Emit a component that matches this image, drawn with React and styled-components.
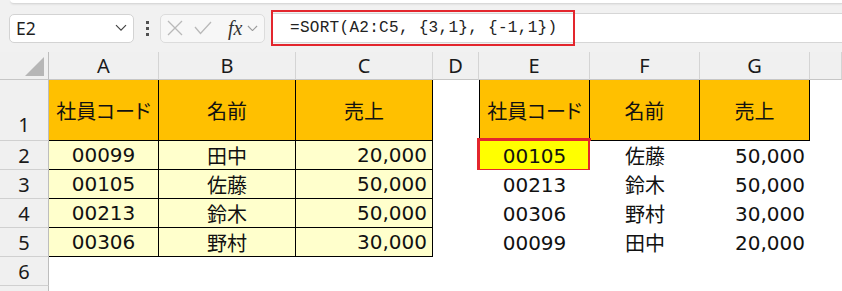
import styled, { createGlobalStyle } from "styled-components";

const GlobalStyle = createGlobalStyle`
  html, body {
    margin: 0;
    padding: 0;
    background: #f1f1f1;
    overflow: hidden;
  }
  body {
    font-family: "Noto Sans", "Noto Sans CJK JP", sans-serif;
  }
`;

const Page = styled.div`
  width: 842px;
  height: 291px;
  background: #f1f1f1;
  overflow: hidden;
`;

const TopStrip = styled.div`
  height: 3px;
  margin-left: 10px;
  background: #ffffff;
  border-bottom: 1px solid #d9d9d9;
  border-bottom-left-radius: 6px;
  box-shadow: 0 1px 2px rgba(0, 0, 0, 0.06);
`;

const FormulaBar = styled.div`
  display: flex;
  align-items: center;
  height: 48px;
  padding-left: 9px;
`;

const NameBox = styled.div`
  box-sizing: border-box;
  display: flex;
  align-items: center;
  justify-content: space-between;
  width: 125px;
  height: 29px;
  padding: 0 6px 0 6px;
  background: #ffffff;
  border: 1px solid #d3d3d3;
  border-radius: 5px;
  font-size: 17.5px;
  color: #1f1f1f;
`;

const Dots = styled.div`
  display: flex;
  flex-direction: column;
  gap: 3px;
  margin: 0 11px 0 12px;

  span {
    width: 3px;
    height: 3px;
    background: #505050;
  }
`;

const FxGroup = styled.div`
  box-sizing: border-box;
  display: flex;
  align-items: center;
  width: 105px;
  height: 29px;
  padding-left: 6px;
  gap: 11px;
  background: #f7f7f7;
  border: 1px solid #dcdcdc;
  border-radius: 5px;
`;

const Fx = styled.span`
  font-family: "Liberation Serif", serif;
  font-style: italic;
  font-size: 20px;
  color: #333333;
  margin-left: 5px;
  margin-right: -6px;
`;

const FormulaInput = styled.div`
  position: relative;
  flex: 1;
  box-sizing: border-box;
  display: flex;
  align-items: center;
  height: 30px;
  margin-left: 6px;
  padding-left: 19px;
  background: #ffffff;
  border-top: 1px solid #d6d6d6;
  border-bottom: 1px solid #d6d6d6;
  font-family: "Liberation Mono", monospace;
  font-size: 16px;
  letter-spacing: 0.3px;
  color: #222222;
`;

const RedFrame = styled.div`
  position: absolute;
  left: 0;
  top: -4px;
  width: 304px;
  height: 36px;
  box-sizing: border-box;
  border: 2px solid #e3262d;
`;

const Sheet = styled.div`
  display: grid;
  grid-template-columns: 49px 110px 137px 137px 46px 111px 110px 110px 1fr;
  grid-template-rows: 28px 61px repeat(6, 29px) 1fr;
  height: 239px;
`;

const HeaderCell = styled.div`
  box-sizing: border-box;
  display: flex;
  align-items: center;
  justify-content: center;
  background: #f0f0f0;
  border-right: 1px solid #d4d4d4;
  border-bottom: 1px solid #c6c6c6;
  font-size: 20px;
  color: #1a1a1a;
`;

const Corner = styled(HeaderCell)`
  position: relative;
  border-right-color: #bdbdbd;

  &::after {
    content: "";
    position: absolute;
    right: 4px;
    bottom: 3px;
    border-style: solid;
    border-width: 0 0 19px 19px;
    border-color: transparent transparent #b6b6b6 transparent;
  }
`;

const RowHeader = styled.div`
  box-sizing: border-box;
  display: flex;
  align-items: ${(p) => (p.$bottom ? "flex-end" : "center")};
  justify-content: center;
  padding-bottom: ${(p) => (p.$bottom ? "2px" : "0")};
  background: #f0f0f0;
  border-right: 1px solid #bdbdbd;
  border-bottom: 1px solid #d0d0d0;
  font-size: 20px;
  color: #1a1a1a;
`;

const Cell = styled.div`
  position: relative;
  box-sizing: border-box;
  display: flex;
  align-items: center;
  justify-content: ${(p) =>
    p.$align === "right" ? "flex-end" : "center"};
  padding: 0 5px;
  background: ${(p) => p.$fill || "#ffffff"};
  border-right: ${(p) => (p.$boxed ? "1px solid #000" : "none")};
  border-bottom: ${(p) => (p.$boxed ? "1px solid #000" : "none")};
  border-left: ${(p) => (p.$openLeft ? "1px solid #000" : "none")};
  font-family: "DejaVu Sans", "Noto Sans CJK JP", sans-serif;
  font-size: 20px;
  color: #111111;
  white-space: nowrap;
`;

const JpText = styled.span`
  font-family: "Noto Sans CJK JP", sans-serif;
  font-size: 20px;
  font-feature-settings: ${(p) => (p.$proportional ? '"palt"' : "normal")};
`;

const Highlight = styled.div`
  position: absolute;
  left: -2px;
  top: -3px;
  right: -1px;
  bottom: -2px;
  border: 3px solid #e3262d;
  pointer-events: none;
`;

const ORANGE = "#ffc000";
const CREAM = "#ffffcc";

const source = [
  ["00099", "田中", "20,000"],
  ["00105", "佐藤", "50,000"],
  ["00213", "鈴木", "50,000"],
  ["00306", "野村", "30,000"],
];

const sorted = [
  ["00105", "佐藤", "50,000"],
  ["00213", "鈴木", "50,000"],
  ["00306", "野村", "30,000"],
  ["00099", "田中", "20,000"],
];

const headers = ["社員コード", "名前", "売上"];
const columns = ["A", "B", "C", "D", "E", "F", "G"];

function Chevron({ size = 12, color = "#444" }) {
  return (
    <svg width={size} height={size * 0.6} viewBox="0 0 12 7">
      <polyline
        points="1,1 6,6 11,1"
        fill="none"
        stroke={color}
        strokeWidth="1.2"
      />
    </svg>
  );
}

function CrossIcon() {
  return (
    <svg width="16" height="16" viewBox="0 0 16 16">
      <path d="M1 1 L15 15 M15 1 L1 15" stroke="#b9b9b9" strokeWidth="1.3" />
    </svg>
  );
}

function CheckIcon() {
  return (
    <svg width="18" height="14" viewBox="0 0 18 14">
      <polyline
        points="1,6 6.5,12.5 17,1"
        fill="none"
        stroke="#b9b9b9"
        strokeWidth="1.3"
      />
    </svg>
  );
}

function DataRow({ rowNo, left, right, highlight }) {
  return (
    <>
      <RowHeader>{rowNo}</RowHeader>
      <Cell $fill={CREAM} $boxed>{left[0]}</Cell>
      <Cell $fill={CREAM} $boxed>
        <JpText>{left[1]}</JpText>
      </Cell>
      <Cell $fill={CREAM} $boxed $align="right">{left[2]}</Cell>
      <Cell />
      <Cell $fill={highlight ? "#ffff00" : undefined}>
        {right[0]}
        {highlight && <Highlight />}
      </Cell>
      <Cell>
        <JpText>{right[1]}</JpText>
      </Cell>
      <Cell $align="right">{right[2]}</Cell>
      <Cell />
    </>
  );
}

export default function App() {
  return (
    <Page>
      <GlobalStyle />
      <TopStrip />
      <FormulaBar>
        <NameBox>
          <span>E2</span>
          <Chevron />
        </NameBox>
        <Dots>
          <span />
          <span />
          <span />
        </Dots>
        <FxGroup>
          <CrossIcon />
          <CheckIcon />
          <Fx>fx</Fx>
          <Chevron size={11} color="#9a9a9a" />
        </FxGroup>
        <FormulaInput>
          {"=SORT(A2:C5, {3,1}, {-1,1})"}
          <RedFrame />
        </FormulaInput>
      </FormulaBar>

      <Sheet>
        <Corner />
        {columns.map((c) => (
          <HeaderCell key={c}>{c}</HeaderCell>
        ))}
        <HeaderCell />

        <RowHeader $bottom>1</RowHeader>
        {headers.map((h) => (
          <Cell key={"l" + h} $fill={ORANGE} $boxed>
            <JpText $proportional>{h}</JpText>
          </Cell>
        ))}
        <Cell />
        {headers.map((h, i) => (
          <Cell key={"r" + h} $fill={ORANGE} $boxed $openLeft={i === 0}>
            <JpText $proportional>{h}</JpText>
          </Cell>
        ))}
        <Cell />

        {source.map((row, i) => (
          <DataRow
            key={i}
            rowNo={i + 2}
            left={row}
            right={sorted[i]}
            highlight={i === 0}
          />
        ))}

        <RowHeader>6</RowHeader>
        <Cell style={{ gridColumn: "2 / -1" }} />
        <RowHeader />
        <Cell style={{ gridColumn: "2 / -1" }} />
      </Sheet>
    </Page>
  );
}
